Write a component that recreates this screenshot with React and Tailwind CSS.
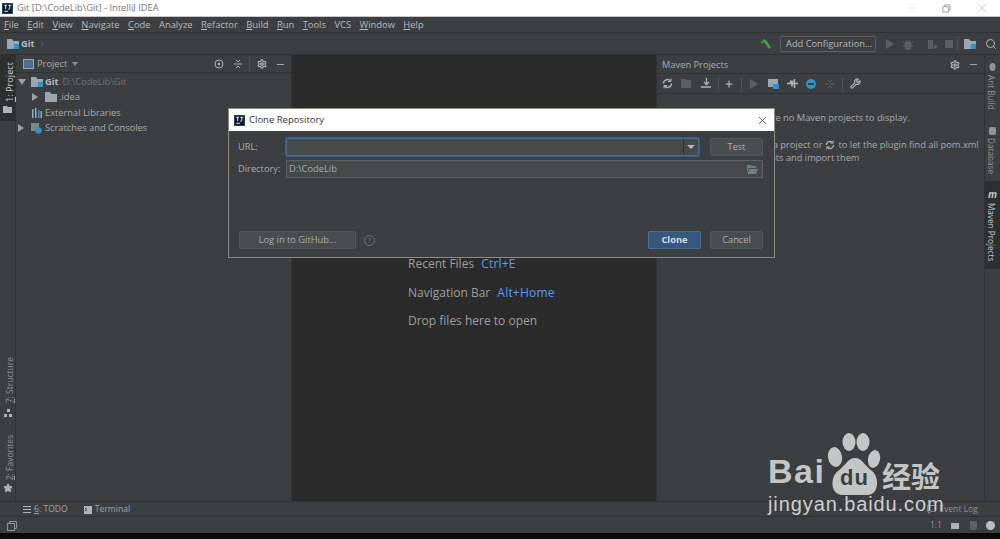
import React from "react";
import { Minus, Plus, Search, Settings, Star, Wrench, X } from "lucide-react";

const sans = "font-['Open_Sans','Noto_Sans',sans-serif]";

function FolderIcon({ className = "", badge = false }) {
  return (
    <svg className={className} width="12" height="10" viewBox="0 0 12 10">
      <path d="M0 0h5l1.500 2H12v8H0z" fill="#9aa7b0" />
      {badge ? <rect x="7" y="5" width="5" height="5" fill="#3592c4" /> : null}
    </svg>
  );
}

function IjLogo({ size = 12 }) {
  return (
    <svg width={size} height={size} viewBox="0 0 12 12">
      <rect width="12" height="12" fill="#0c1b2c" />
      <rect x="0" y="0" width="12" height="12" fill="none" stroke="#2f86c9" strokeWidth="0.8" />
      <path d="M2.500 2.500h3M4 2.500v4M7 2.500h3M8.500 2.500v3.500c0 .8-.8 1-1.800.6M2.500 9h4" stroke="#fff" strokeWidth="1" fill="none" />
    </svg>
  );
}

function RefreshIcon({ size = 11 }) {
  return (
    <svg width={size} height={size} viewBox="0 0 11 11" fill="none" stroke="#afb1b3" strokeWidth="1.500">
      <path d="M1.500 5.500a4 4 0 0 1 7-2.500M9.500 5.500a4 4 0 0 1-7 2.500" />
      <path d="M9 0.500V3.500H6M2 10.500V7.500H5" strokeWidth="1" />
    </svg>
  );
}

function Stripe({ label, icon, active = false, side = "left", className = "", textClass = "text-[8.5px]" }) {
  return (
    <div className={`flex items-center w-[15px] ${side === "left" ? "flex-col-reverse" : "flex-col"} ${active ? "bg-[#2d2f30]" : ""} ${className}`}>
      {icon}
      <span
        className={`leading-[15px] whitespace-nowrap [writing-mode:vertical-rl] ${textClass} ${active ? "text-[#c4c8ca]" : "text-[#8f9496]"} ${side === "left" ? "rotate-180 translate-x-[2px]" : "-translate-x-[1px]"}`}
      >
        {label}
      </span>
    </div>
  );
}

function TreeRow({ indent = "", arrow = null, icon, children }) {
  return (
    <div className={`flex items-center h-[15.5px] ${indent}`}>
      <span className="w-[13px] shrink-0 flex">
        {arrow === "open" ? <span className="border-t-[6px] border-t-[#9aa0a3] border-x-[4px] border-x-transparent" /> : null}
        {arrow === "closed" ? <span className="border-l-[6px] border-l-[#9aa0a3] border-y-[4px] border-y-transparent" /> : null}
      </span>
      <span className="w-[14px] shrink-0 flex">{icon}</span>
      {children}
    </div>
  );
}

function DialogButton({ children, primary = false, className = "" }) {
  return (
    <button
      type="button"
      className={`h-[18px] rounded-[2px] border text-[9.3px] ${primary ? "bg-[#365880] border-[#4c708c] text-[#d3dbe3] font-bold" : "bg-[#4a4d4f] border-[#555859] text-[#a9adb0]"} ${className}`}
    >
      {children}
    </button>
  );
}

function BaiduMark() {
  return (
    <div className="absolute left-[767px] top-[431px] w-[200px] text-[#c4c6c6]">
      <div className="relative h-[64px]">
        <span className="absolute left-[1px] top-[21px] text-[34px] leading-[38px] tracking-[1.500px] font-bold font-['Liberation_Sans',sans-serif]">Bai</span>
        <svg className="absolute left-[60px] top-[2px]" width="56" height="64" viewBox="0 0 56 64">
          <ellipse cx="8" cy="24" rx="7" ry="10" fill="#c4c6c6" transform="rotate(-10 8 24)" />
          <ellipse cx="22" cy="9" rx="6.500" ry="9" fill="#c4c6c6" />
          <ellipse cx="36" cy="9" rx="6.500" ry="9" fill="#c4c6c6" />
          <ellipse cx="47" cy="26" rx="6" ry="9" fill="#c4c6c6" transform="rotate(12 47 26)" />
          <path d="M28 25C35 25 38 33 45 38C52 43 53 62 40 62H16C3 62 3 44 11 38C18 33 21 25 28 25z" fill="#c4c6c6" />
        </svg>
        <span className="absolute left-[73px] top-[36px] text-[22px] leading-[22px] tracking-[1px] font-bold text-[#3c3f41] font-['Liberation_Sans',sans-serif]">du</span>
        <span className="absolute left-[115px] top-[27px] text-[29px] leading-[34px] font-bold font-['Noto_Sans_CJK_SC',sans-serif] whitespace-nowrap">经验</span>
      </div>
      <div className="absolute left-[1px] top-[61px] text-[20px] leading-[24px] tracking-[0.900px] whitespace-nowrap font-['Liberation_Sans',sans-serif] text-[#cdcfcf]">jingyan.baidu.com</div>
    </div>
  );
}

export default function App() {
  const menus = [
    ["F", "ile"], ["E", "dit"], ["V", "iew"], ["N", "avigate"], ["C", "ode"], ["", "Analyze"],
    ["R", "efactor"], ["B", "uild"], ["R", "un"], ["T", "ools"], ["", "VCS"], ["W", "indow"], ["H", "elp"],
  ];

  return (
    <div className={`relative w-[1000px] h-[539px] overflow-hidden bg-[#3c3f41] text-[#a7abad] flex flex-col ${sans}`}>
      {/* title bar */}
      <div className="h-[17px] shrink-0 bg-white flex items-center pl-[2px] border-b border-[#c8c8c8]">
        <IjLogo size={11} />
        <span className="ml-[4px] text-[9.3px] text-[#777]">Git [D:\CodeLib\Git] - IntelliJ IDEA</span>
        <div className="ml-auto flex items-center gap-[25px] pr-[12px] text-[#999]">
          <Minus size={10} strokeWidth={1} />
          <svg width="9" height="9" viewBox="0 0 10 10" fill="none" stroke="#999">
            <rect x="1" y="3" width="6" height="6" />
            <path d="M3 3V1h6v6H7" />
          </svg>
          <X size={12} strokeWidth={1} />
        </div>
      </div>

      {/* menu */}
      <div className="h-[16px] shrink-0 flex items-center gap-[8.45px] px-[4px] pt-[1px] text-[9.4px] text-[#b5b9bb] border-b border-[#323232]">
        {menus.map(([key, rest]) => (
          <span key={key + rest}>
            <span className="underline">{key}</span>
            {rest}
          </span>
        ))}
      </div>

      {/* nav bar */}
      <div className="h-[22px] shrink-0 flex items-center pl-[7px] pt-[1px] border-b border-[#323232]">
        <FolderIcon badge />
        <span className="ml-[2px] text-[9.3px] font-bold text-[#b5b9bb]">Git</span>
        <span className="ml-[4px] w-[4px] h-[4px] border-t border-r border-[#515557] rotate-45" />
        <div className="ml-auto flex items-center">
          <svg width="12" height="12" viewBox="0 0 12 12">
            <path d="M1 4l3-3 2 1 5 7-2 2-5-7-2 2z" fill="#499c54" />
          </svg>
          <div className="ml-[8px] w-[96px] h-[16px] pl-[5px] flex items-center border border-[#5e6264] rounded-[2px] text-[9.3px] text-[#b5b9bb]">
            Add Configuration...
          </div>
          <span className="ml-[10px] border-l-[8px] border-l-[#5b5f60] border-y-[5px] border-y-transparent" />
          <svg className="ml-[9px]" width="10" height="11" viewBox="0 0 10 11">
            <ellipse cx="5" cy="6.500" rx="3.500" ry="4.500" fill="#5b5f60" />
            <path d="M0 3l2 1.500M10 3L8 4.500M0 7h2M10 7H8M3 1l1 1.500M7 1L6 2.500" stroke="#5b5f60" />
          </svg>
          <svg className="ml-[14px]" width="11" height="11" viewBox="0 0 11 11">
            <path d="M1 1h5v9H1zM7 5l4 2.500L7 10z" fill="#5b5f60" />
          </svg>
          <span className="ml-[7px] w-2 h-2 bg-[#5b5f60]" />
          <span className="ml-[4px] h-[14px] border-l border-[#515557]" />
          <span className="ml-[6px]"><FolderIcon badge /></span>
          <Search size={12} strokeWidth={2} className="ml-[9px] mr-[3px] text-[#b5b9bb]" />
        </div>
      </div>

      {/* main area */}
      <div className="flex-1 min-h-0 flex">
        <div className="w-4 shrink-0 border-r border-[#323232] flex flex-col justify-between">
          <Stripe
            active
            className="pt-[7px] pb-[8px] gap-[4px]"
            textClass="text-[9.2px]"
            label={<><span className="underline">1</span>: Project</>}
            icon={<svg width="9" height="7" viewBox="0 0 9 7"><path d="M0 0h4l1 1h4v6H0z" fill="#afb1b3" /></svg>}
          />
          <div className="flex flex-col gap-[18px] pb-[8px]">
            <Stripe
              className="gap-[5px]"
              label={<><span className="underline">7</span>: Structure</>}
              icon={<svg width="8" height="8" viewBox="0 0 8 8"><path d="M3 0h3v3H3zM0 5h3v3H0zM5 5h3v3H5z" fill="#afb1b3" /></svg>}
            />
            <Stripe
              className="gap-[3px]"
              label={<><span className="underline">2</span>: Favorites</>}
              icon={<Star size={10} fill="#afb1b3" stroke="#afb1b3" />}
            />
          </div>
        </div>

        {/* project panel */}
        <div className="w-[275px] shrink-0 flex flex-col">
          <div className="h-[18px] shrink-0 flex items-center pl-[7px] pr-[5px] pt-[1px] border-b border-[#323232]">
            <svg width="11" height="10" viewBox="0 0 11 10"><rect x="0.500" y="0.500" width="10" height="9" fill="#4d6f8c" stroke="#9aa7b0" /></svg>
            <span className="ml-[3px] text-[9.3px]">Project</span>
            <span className="ml-[5px] border-t-[4px] border-t-[#8a8f91] border-x-[3px] border-x-transparent" />
            <div className="ml-auto flex items-center text-[#afb1b3]">
              <svg width="10" height="10" viewBox="0 0 10 10" fill="none" stroke="#afb1b3">
                <circle cx="5" cy="5" r="4" />
                <circle cx="5" cy="5" r="1" fill="#afb1b3" />
              </svg>
              <svg className="ml-[9px]" width="10" height="10" viewBox="0 0 10 10" fill="none" stroke="#afb1b3">
                <path d="M1 5h8M3 1l2 2 2-2M3 9l2-2 2 2" />
              </svg>
              <span className="ml-[6px] h-[14px] border-l border-[#515557]" />
              <Settings size={10} strokeWidth={3} className="ml-[7px]" />
              <Minus size={11} strokeWidth={2} className="ml-[8px]" />
            </div>
          </div>
          <div className="pt-[1px] pl-[2px] text-[9.3px]">
            <TreeRow arrow="open" icon={<FolderIcon badge />}>
              <span className="font-bold text-[#b5b9bb]">Git</span>
              <span className="ml-[4px] text-[#6f7476]">D:\CodeLib\Git</span>
            </TreeRow>
            <TreeRow indent="pl-[14px]" arrow="closed" icon={<FolderIcon />}>
              <span>.idea</span>
            </TreeRow>
            <TreeRow icon={
              <svg width="11" height="10" viewBox="0 0 11 10">
                <path d="M1 1h1.500v9H1zM4 0h1.500v10H4z" fill="#9aa7b0" />
                <path d="M7 2h1.500v8H7z" fill="#3592c4" />
                <path d="M9.500 3H11v7H9.500z" fill="#9aa7b0" />
              </svg>
            }>
              <span>External Libraries</span>
            </TreeRow>
            <TreeRow arrow="closed" icon={
              <svg width="11" height="11" viewBox="0 0 11 11">
                <rect x="0" y="0" width="8" height="8" fill="#7f8588" />
                <circle cx="7.500" cy="7.500" r="3.200" fill="#3592c4" />
              </svg>
            }>
              <span>Scratches and Consoles</span>
            </TreeRow>
          </div>
        </div>

        {/* editor */}
        <div className="w-[365px] shrink-0 bg-[#2b2b2b] border-l border-[#323232] flex flex-col items-start pl-[116px] pt-[202px] text-[12px] text-[#9b9e9f] gap-[14.5px] leading-[14px]">
          <div>Recent Files <span className="ml-[4px] text-[#589df6] tracking-[0.2px]">Ctrl+E</span></div>
          <div>Navigation Bar <span className="ml-[4px] text-[#589df6] tracking-[0.2px]">Alt+Home</span></div>
          <div>Drop files here to open</div>
        </div>

        {/* maven panel */}
        <div className="flex-1 min-w-0 flex flex-col border-l border-[#323232]">
          <div className="h-[18px] shrink-0 flex items-center pl-[5px] pr-[5px] pt-[1px] text-[9.3px]">
            Maven Projects
            <div className="ml-auto flex items-center text-[#afb1b3]">
              <Settings size={10} strokeWidth={3} />
              <Minus size={11} strokeWidth={2} className="ml-[8px]" />
            </div>
          </div>
          <div className="h-[21px] shrink-0 flex items-center pl-[5px] border-y border-[#323232] text-[#afb1b3]">
            <RefreshIcon />
            <svg className="ml-[8px]" width="11" height="11" viewBox="0 0 11 11"><path d="M0 1h4l1 1h5v8H0z" fill="#5b5f60" /></svg>
            <svg className="ml-[9px]" width="11" height="11" viewBox="0 0 11 11" fill="none" stroke="#afb1b3" strokeWidth="1.300"><path d="M5.500 0v6M3 4l2.500 2.500L8 4M0 9h10" /></svg>
            <span className="ml-[6px] h-[14px] border-l border-[#515557]" />
            <Plus size={10} strokeWidth={3} className="ml-[5px]" />
            <span className="ml-[7px] h-[14px] border-l border-[#515557]" />
            <span className="ml-[8px] border-l-[8px] border-l-[#5b5f60] border-y-[5px] border-y-transparent" />
            <svg className="ml-[10px]" width="11" height="10" viewBox="0 0 11 10"><rect width="10" height="8" fill="#9aa7b0" /><rect x="5" y="5" width="6" height="5" fill="#3592c4" /></svg>
            <svg className="ml-[8px]" width="11" height="11" viewBox="0 0 11 11" fill="none" stroke="#afb1b3" strokeWidth="1.500"><path d="M0 5.500h3l1-3 1 6 1-6M6 5.500h5M7.500 1v9" /></svg>
            <span className="ml-[8px] w-[10px] h-[10px] rounded-full bg-[#3592c4] flex items-center justify-center"><span className="w-[6px] h-[2px] bg-[#3c3f41]" /></span>
            <svg className="ml-[9px]" width="10" height="10" viewBox="0 0 10 10" fill="none" stroke="#5b5f60"><path d="M0 5h10M3 1l2 2 2-2M3 9l2-2 2 2" /></svg>
            <span className="ml-[7px] h-[14px] border-l border-[#515557]" />
            <Wrench size={11} strokeWidth={2.500} className="ml-[7px]" />
          </div>
          <div className="pl-[82px] pt-[17px] text-[9.3px] leading-[13px] whitespace-nowrap">
            <div>There are no Maven projects to display.</div>
            <div className="mt-[14px] ml-[14px] flex items-center">
              <span>Add a project or</span>
              <span className="mx-[3px]"><RefreshIcon size={10} /></span>
              <span>to let the plugin find all pom.xml</span>
            </div>
            <div className="ml-[16px]">scripts and import them</div>
          </div>
        </div>

        <div className="w-4 shrink-0 border-l border-[#323232] flex flex-col items-center pt-[8px]">
          <Stripe
            side="right"
            className="gap-[4px]"
            textClass="text-[8.2px]"
            label="Ant Build"
            icon={<svg width="9" height="8" viewBox="0 0 9 8"><ellipse cx="4.500" cy="4" rx="3" ry="4" fill="#8f9496" /></svg>}
          />
          <Stripe
            side="right"
            className="mt-[17px] gap-[3px]"
            textClass="text-[8.2px]"
            label="Database"
            icon={<svg width="9" height="8" viewBox="0 0 9 8"><rect x="1" width="7" height="8" rx="2" fill="#8f9496" /></svg>}
          />
          <Stripe
            side="right"
            active
            className="mt-[7px] pt-[9px] pb-[8px] gap-[5px]"
            textClass="text-[8.2px]"
            label="Maven Projects"
            icon={<span className="text-[10px] leading-[8px] italic font-bold text-[#c4c8ca]">m</span>}
          />
        </div>
      </div>

      {/* bottom tool windows */}
      <div className="h-[16px] shrink-0 flex items-center pl-[23px] pr-[22px] pt-[1px] border-y border-[#323232] text-[8.6px] text-[#a0a4a6]">
        <svg width="8" height="7" viewBox="0 0 8 7"><path d="M0 0h8v1H0zM0 3h8v1H0zM0 6h8v1H0z" fill="#afb1b3" /></svg>
        <span className="ml-[3px]"><span className="underline">6</span>: TODO</span>
        <svg className="ml-[16px]" width="8" height="8" viewBox="0 0 8 8"><rect width="8" height="8" fill="#afb1b3" /><path d="M1 2l2 1.500L1 5" stroke="#3c3f41" fill="none" /></svg>
        <span className="ml-[3px]">Terminal</span>
        <svg className="ml-auto" width="9" height="9" viewBox="0 0 9 9" fill="none" stroke="#7f8588"><path d="M.5.500h8v6h-5l-2 2v-2h-1z" /></svg>
        <span className="ml-[3px] text-[#8f9496]">Event Log</span>
      </div>

      {/* status bar */}
      <div className="h-[16px] shrink-0 flex items-center pl-[7px] pr-[5px] pt-[1px] text-[8.6px] text-[#8f9496]">
        <svg width="10" height="10" viewBox="0 0 10 10" fill="none" stroke="#8f9496">
          <rect x="0.500" y="2.500" width="7" height="7" />
          <path d="M2.500 2.500v-2h7v7h-2" />
        </svg>
        <span className="ml-auto">1:1</span>
        <span className="ml-[9px] w-[8px] h-[6px] bg-[#afb1b3]" />
        <span className="ml-[11px] w-[7px] h-[9px] rounded-[2px] bg-[#5f6365]" />
        <span className="ml-[9px] w-[9px] h-[9px] rounded-full bg-[#b8bcbe]" />
      </div>

      {/* desktop behind the window */}
      <div className="h-[6px] shrink-0 bg-[#0b0a09]" />

      {/* clone dialog */}
      <div className="absolute left-[228px] top-[108px] w-[547px] h-[150px] border border-[#8d8a80] bg-[#3c3f41] flex flex-col">
        <div className="h-[22px] shrink-0 bg-white flex items-center pl-[5px] pr-[4px] text-[9.5px] text-[#333]">
          <IjLogo size={11} />
          <span className="ml-[4px]">Clone Repository</span>
          <X size={13} strokeWidth={1.200} className="ml-auto mr-[1px] text-[#222]" />
        </div>
        <div className="flex-1 flex flex-col pl-[9px] pr-[11px] pt-[7px] pb-[8px] text-[9.3px]">
          <div className="flex items-center h-[18px]">
            <span className="w-[48px]">URL:</span>
            <div className="w-[413px] h-[18px] flex justify-end bg-[#45494a] border border-[#466d94] outline outline-[#2f5f8a] rounded-[1px]">
              <span className="w-[15px] border-l border-[#2f3133] flex items-center justify-center">
                <span className="border-t-[4px] border-t-[#b5b9bb] border-x-[4px] border-x-transparent" />
              </span>
            </div>
            <DialogButton className="ml-[11px] w-[53px]">Test</DialogButton>
          </div>
          <div className="mt-[4px] flex items-center h-[18px]">
            <span className="w-[48px]">Directory:</span>
            <div className="w-[477px] h-[18px] flex items-center justify-between pl-[2px] pr-[4px] bg-[#45494a] border border-[#5e6264]">
              <span>D:\CodeLib</span>
              <svg width="11" height="9" viewBox="0 0 11 9"><path d="M0 0h4l1 1h4v2H2L0 8zM2.500 4H11L9 9H.5z" fill="#6f7f89" /></svg>
            </div>
          </div>
          <div className="mt-auto flex items-center pl-[1px]">
            <DialogButton className="w-[117px]">Log in to GitHub...</DialogButton>
            <span className="ml-[8px] w-[11px] h-[11px] rounded-full border border-[#6f7476] flex items-center justify-center text-[8px] leading-[8px] text-[#6f7476]">?</span>
            <DialogButton primary className="ml-auto w-[53px]">Clone</DialogButton>
            <DialogButton className="ml-[9px] w-[53px]">Cancel</DialogButton>
          </div>
        </div>
      </div>

      <BaiduMark />
    </div>
  );
}
